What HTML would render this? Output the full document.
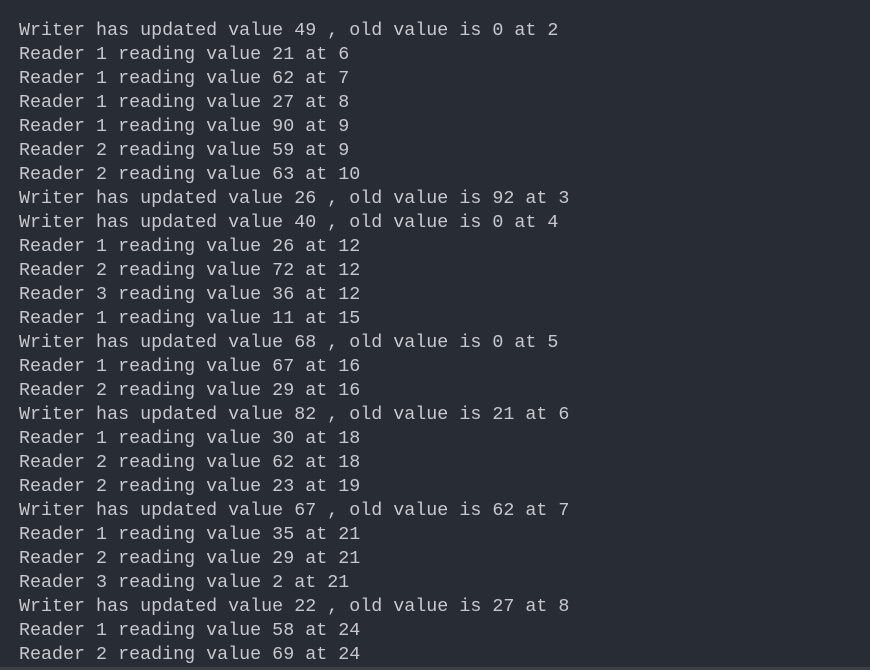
<!DOCTYPE html>
<html><head><meta charset="utf-8"><style>
html,body{margin:0;padding:0;background:#282c34;width:870px;height:670px;overflow:hidden}
pre{margin:0;padding:19px 0 0 19px;font-family:"Liberation Mono",monospace;font-size:18.35px;line-height:24px;color:#c5c8cf}
.b{position:absolute;left:0;top:667px;width:870px;height:3px;background:#3a3f4a}
</style></head><body><pre>Writer has updated value 49 , old value is 0 at 2
Reader 1 reading value 21 at 6
Reader 1 reading value 62 at 7
Reader 1 reading value 27 at 8
Reader 1 reading value 90 at 9
Reader 2 reading value 59 at 9
Reader 2 reading value 63 at 10
Writer has updated value 26 , old value is 92 at 3
Writer has updated value 40 , old value is 0 at 4
Reader 1 reading value 26 at 12
Reader 2 reading value 72 at 12
Reader 3 reading value 36 at 12
Reader 1 reading value 11 at 15
Writer has updated value 68 , old value is 0 at 5
Reader 1 reading value 67 at 16
Reader 2 reading value 29 at 16
Writer has updated value 82 , old value is 21 at 6
Reader 1 reading value 30 at 18
Reader 2 reading value 62 at 18
Reader 2 reading value 23 at 19
Writer has updated value 67 , old value is 62 at 7
Reader 1 reading value 35 at 21
Reader 2 reading value 29 at 21
Reader 3 reading value 2 at 21
Writer has updated value 22 , old value is 27 at 8
Reader 1 reading value 58 at 24
Reader 2 reading value 69 at 24</pre><div class="b"></div></body></html>
